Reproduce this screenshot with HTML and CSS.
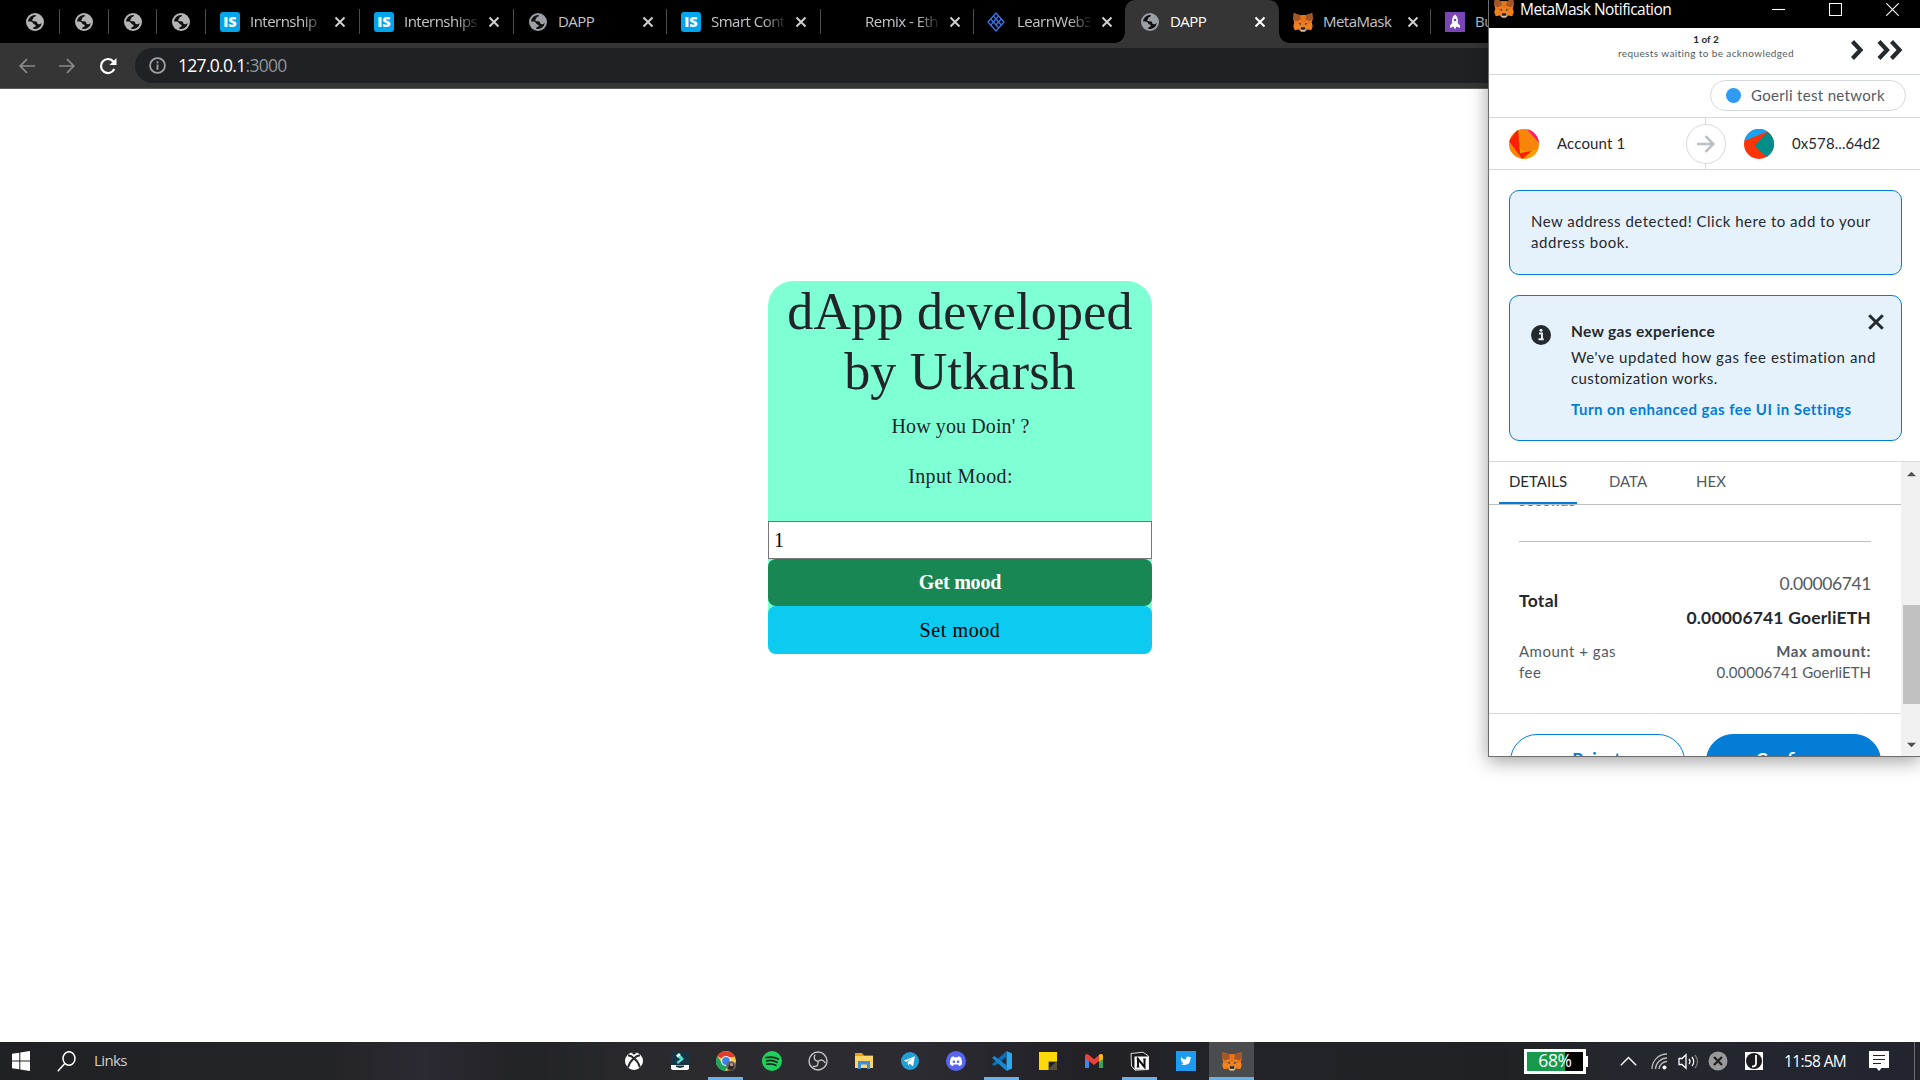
FILE: index.html
```html
<!DOCTYPE html>
<html lang="en">
<head>
<meta charset="utf-8">
<title>DAPP</title>
<link rel="stylesheet" href="styles.css">
</head>
<body>
<svg class="defs" aria-hidden="true">
  <symbol id="globe" viewBox="0 0 18 18">
    <circle cx="9" cy="9" r="9" fill="currentColor"/>
    <path class="globe-sea" d="M2 8.6A7 7 0 0 1 9.6 2c.6.6.2 1.5-.8 1.8-.9.3-1.8.8-1.6 1.7.2.8-1 .8-1 1.700 0 .9 1 1 2.500 1 2 0 2.600.8 2.600 1.900 0 1 1 1.200 2.100 1.100 1 0 1.700-.6 2.400-1.400A7 7 0 0 1 7.200 15.800c-.3-1.200.3-1.700 1.400-1.900 1.200-.2 1.500-1.500.6-2.100-.7-.5-1.600-.5-2-1.400C6.600 9 5.400 8.600 4 8.600z"/>
  </symbol>
  <symbol id="close" viewBox="0 0 12 12"><path d="M1.500 1.500l9 9M10.500 1.500l-9 9" stroke="currentColor" stroke-width="2" fill="none"/></symbol>
  <symbol id="is" viewBox="0 0 20 20"><rect width="20" height="20" rx="3" fill="#00a5ec"/><text x="10" y="15.200" text-anchor="middle" textLength="13.500" lengthAdjust="spacingAndGlyphs" class="is-text">IS</text></symbol>
  <symbol id="fox" viewBox="0 0 20 20">
    <path d="M.8.900 7.200 3.300h5.600L19.200.900l.5 6.300-1 3 1 4-1.400 4.100-3.900-.9-2.600 2H8.200l-2.600-2-3.900.9L.3 14.200l1-4-1-3z" fill="#f08020"/>
    <path d="M.8.900 7.200 3.300l1 4.500L3 9.200.3 7.200zM19.200.900l-6.400 2.400-1 4.500L17 9.200l2.700-2z" fill="#a4552a"/>
    <path d="M7.200 3.300h5.600l-1 7H8.200zM3 9.200l5.200 1-2.600 2.300L1.300 10z" fill="#e67418"/>
    <path d="M17 9.200l-5.200 1 2.600 2.300 4.300-2.500z" fill="#e67418"/>
    <path d="M5.300 11.800l2.600-.9.300 2.100zM14.700 11.800l-2.600-.9-.3 2.100z" fill="#33404a"/>
    <path d="M7 15.500h6l-.8 4H7.800z" fill="#d8c4b2"/><path d="M8 15.200h4l.5 1.700-1 .8h-3l-1-.8z" fill="#1d2429"/>
  </symbol>
</svg>

<div class="tabstrip">
  <div class="tab pinned"><svg class="fav grey"><use href="#globe"/></svg></div>
  <div class="tab pinned"><svg class="fav grey"><use href="#globe"/></svg></div>
  <div class="tab pinned narrow"><svg class="fav grey"><use href="#globe"/></svg></div>
  <div class="tab pinned"><svg class="fav grey"><use href="#globe"/></svg></div>
  <div class="tab"><svg class="fav big"><use href="#is"/></svg><span class="label fade">Internship |</span><svg class="x"><use href="#close"/></svg></div>
  <div class="tab"><svg class="fav big"><use href="#is"/></svg><span class="label fade">Internships</span><svg class="x"><use href="#close"/></svg></div>
  <div class="tab w153"><svg class="fav"><use href="#globe"/></svg><span class="label">DAPP</span><svg class="x"><use href="#close"/></svg></div>
  <div class="tab"><svg class="fav big"><use href="#is"/></svg><span class="label fade">Smart Cont</span><svg class="x"><use href="#close"/></svg></div>
  <div class="tab w153"><svg class="fav"></svg><span class="label fade">Remix - Eth</span><svg class="x"><use href="#close"/></svg></div>
  <div class="tab w152 noline">
    <svg class="fav tall" viewBox="0 0 18 20" fill="none" stroke="#3b74e8" stroke-width="1.300"><path d="M9 1l8 9-8 9-8-9z" stroke-linejoin="round"/><path d="M6.300 4l8 9M3.700 7l8 9M11.700 4l-5.400 6M14.300 7l-5.300 6M6.500 10l-3 3.400"/></svg>
    <span class="label fade">LearnWeb3</span><svg class="x"><use href="#close"/></svg></div>
  <div class="tab active"><svg class="fav"><use href="#globe"/></svg><span class="label">DAPP</span><svg class="x"><use href="#close"/></svg></div>
  <div class="tab w152"><svg class="fav big"><use href="#fox"/></svg><span class="label">MetaMask</span><svg class="x"><use href="#close"/></svg></div>
  <div class="tab noline"><svg class="fav big" viewBox="0 0 20 20"><rect width="20" height="20" fill="#7a45b5"/><path d="M10 2.500c3 2.500 3.300 6 2.700 8.500l2.300 2.500v2.500l-3.500-1.500L10 17.500l-1.500-3L5 16v-2.500L7.300 11C6.700 8.500 7 5 10 2.500z" fill="#fff"/><circle cx="10" cy="8" r="1.300" fill="#7a45b5"/></svg><span class="label">Bu</span></div>
</div>

<div class="toolbar">
  <svg class="nav dim" viewBox="0 0 16 16"><path d="M16 8H1.500M8 1.200L1.200 8 8 14.800"/></svg>
  <svg class="nav dim" viewBox="0 0 16 16"><path d="M0 8h14.500M8 1.200L14.800 8 8 14.800"/></svg>
  <svg class="nav reload" viewBox="0 0 18 18"><path d="M15.300 12A7 7 0 1 1 14.500 4.700" fill="none" stroke="#fff" stroke-width="2.200"/><path d="M17.500 1v7h-7z" fill="#fff"/></svg>
  <div class="omnibox">
    <svg class="info" viewBox="0 0 16 16"><circle cx="8" cy="8" r="7" fill="none" stroke="#9aa0a6" stroke-width="1.700"/><path d="M8 7v5M8 4v1.800" stroke="#9aa0a6" stroke-width="1.800"/></svg>
    <span class="url"><b>127.0.0.1</b>:3000</span>
  </div>
</div>

<main class="page">
  <section class="card">
    <h1><span>dApp developed</span><br><span class="second">by Utkarsh</span></h1>
    <p class="ask">How you Doin' ?</p>
    <label class="ask mood" for="mood">Input Mood:</label>
    <input id="mood" type="text" value="1">
    <button class="btn get">Get mood</button>
    <button class="btn set">Set mood</button>
  </section>
</main>

<footer class="taskbar">
  <svg class="start" viewBox="0 0 18 20" fill="#fff"><path d="M0 2.800l7.300-1V9.500H0zM8.300 1.600L18 0v9.500H8.300zM0 10.500h7.300v7.700L0 17.200zM8.300 10.500H18V20l-9.700-1.600z"/></svg>
  <svg class="search" viewBox="0 0 19 21" fill="none" stroke="#fff" stroke-width="1.500"><ellipse cx="12" cy="7.500" rx="6" ry="6.800"/><path d="M7.800 12.500L.8 20.300"/></svg>
  <span class="links">Links</span>
  <div class="apps">
    <div class="app"><svg viewBox="0 0 20 20"><circle cx="10" cy="10" r="9" fill="#fff"/><path d="M4 4.500Q7 4 10 7.300 13 4 16 4.500M10 7.300Q5.500 11 4 16.500M10 7.300q4.500 3.700 6 9.200" fill="none" stroke="#2b2b2f" stroke-width="2"/><path d="M6 1.600q4-1.400 8 0Q12 2.200 10 3.700 8 2.200 6 1.600z" fill="#2b2b2f"/></svg></div>
    <div class="app"><svg viewBox="0 0 20 20"><rect x="1" y="1" width="18" height="15" rx="2" fill="#173445"/><path d="M1 14h18v3a2 2 0 0 1-2 2H3a2 2 0 0 1-2-2z" fill="#fff"/><path d="M6 14.500h8v1.500l-4 1-4-1z" fill="#173445"/><path d="M6 4.500L9 2l2 2-3 3z" fill="#e8fffb"/><path d="M8 6l3-1.500L14 8l-6 5-1.500-2L10 8.500z" fill="#4ce0cf"/></svg></div>
    <div class="app running"><svg viewBox="0 0 20 20"><circle cx="10" cy="10" r="10" fill="#ffcd40"/><path d="M10 10L1.300 5A10 10 0 0 1 18.700 5.500L18 6H10z" fill="#e33b2e"/><path d="M1.300 5A10 10 0 0 0 9 20l4.500-8L6 12z" fill="#1ea362"/><circle cx="10" cy="10" r="5" fill="#fff"/><circle cx="10" cy="10" r="3.900" fill="#3d80f0"/><circle cx="15" cy="15" r="4.800" fill="#6c625c"/><path d="M12 18l1-5 3-2 2 3-1 5z" fill="#2f2a29"/><circle cx="15.500" cy="13.500" r="1.700" fill="#b59a8b"/></svg></div>
    <div class="app"><svg viewBox="0 0 20 20"><circle cx="10" cy="10" r="10" fill="#1ed15e"/><path d="M4 6.700q6.500-1.800 12.300 1.300M4.500 10q5.500-1.500 10.500 1.200M5 13.200q4.500-1.200 8.800 1.100" fill="none" stroke="#17251b" stroke-width="1.800" stroke-linecap="round"/></svg></div>
    <div class="app"><svg viewBox="0 0 20 20" fill="none" stroke="#c4c4c4" stroke-width="1.400"><circle cx="10" cy="10" r="9"/><path d="M10 10.500Q4.500 9 7 3.800M10 10.500q4.500-3.500 7.200 1.500M10 10.500q1 5.500-5.300 5"/></svg></div>
    <div class="app"><svg viewBox="0 0 20 20"><path d="M1 2h7l2 2.500h9V17H1z" fill="#e9a11b"/><path d="M1 5h18v12H1z" fill="#ffd666"/><path d="M4 18v-8h12v8h-3v-4.500H7V18z" fill="#3c8fd8"/></svg></div>
    <div class="app"><svg viewBox="0 0 20 20"><circle cx="10" cy="10" r="9" fill="#239fd8"/><path d="M3.800 9.800L15 5.200l-2 10-3.300-2.500L8 14.300l-.4-3.200L12.500 7l-6.200 3.800z" fill="#fff"/></svg></div>
    <div class="app"><svg viewBox="0 0 20 20"><circle cx="10" cy="10" r="10" fill="#5865f2"/><path d="M7.800 5.200l-2.300.8C4.300 8 3.700 10.500 4 13.500c1 .8 2 1.300 3 1.500l.8-1.400h4.400L13 15c1-.2 2-.7 3-1.500.3-3-.3-5.500-1.500-7.500l-2.300-.8-.5 1H8.300z" fill="#fff"/><circle cx="7.900" cy="10.700" r="1.300" fill="#5865f2"/><circle cx="12.100" cy="10.700" r="1.300" fill="#5865f2"/></svg></div>
    <div class="app running"><svg viewBox="0 0 20 20"><path d="M14.500 0L20 2.500v15L14.500 20z" fill="#2ba8ee"/><path d="M0 13.200L14.500 0v6L2.500 15z" fill="#0b6fb8"/><path d="M0 6.700L2.500 5l12 9.200V20z" fill="#1689d2"/></svg></div>
    <div class="app"><svg viewBox="0 0 20 20"><path d="M1 1h18v9.500L10.500 19H1z" fill="#ffd80a"/><path d="M10.500 10.500H19V19h-8.500z" fill="#55503d"/><path d="M11 11v6.500l6.500-6.500z" fill="#1f1f22"/></svg></div>
    <div class="app"><svg viewBox="0 0 20 20"><path d="M1 5h4v12H1z" fill="#4385f3"/><path d="M15 5h4v12h-4z" fill="#34a853"/><path d="M1 7V4.500Q2.500 2 5 4l5 4.200L15 4q2.500-2 4 .5V7l-9 7z" fill="#ea4335"/><path d="M15 4q2.500-2 4 .5V8l-4 3z" fill="#fbbc04"/></svg></div>
    <div class="app running"><svg viewBox="0 0 20 20"><path d="M1 2.500L13 1.200 18.500 5v13.500L5 19.200 1.500 15z" fill="#1a1a1a" stroke="#ddd" stroke-width="1"/><path d="M4.500 5.500h14v13h-14z" fill="#fff"/><path d="M8 16V8l6.500 8V8" fill="none" stroke="#111" stroke-width="2"/><path d="M6.500 8H9M13 8h3M6.500 16h3" stroke="#111"/></svg></div>
    <div class="app"><svg viewBox="0 0 20 20"><rect width="20" height="20" fill="#1d9bf0"/><path d="M5 6q2.300 2.500 5 2.600Q9.800 5.600 12 5.500q1 0 1.700.7L15.200 6l-.8 1.800Q14.300 14 8.500 14q-2 0-3.500-1 1.800 0 2.800-.8-1.500-.2-2-1.500Q4.500 9 5 6z" fill="#fff"/></svg></div>
    <div class="app running focused"><svg><use href="#fox"/></svg></div>
  </div>
  <div class="battery"><span class="level">68%</span></div>
  <div class="tray">
    <svg class="chev" viewBox="0 0 17 10"><path d="M.8 9.200L8.500 1.500l7.700 7.700" fill="none" stroke="#fff" stroke-width="1.400"/></svg>
    <svg class="wifi" viewBox="0 0 16 17" fill="none" stroke="#bbb" stroke-width="1.300"><path d="M1 16A15 15 0 0 1 16 1M4.500 16A11.500 11.500 0 0 1 16 5M8 16a8 8 0 0 1 8-7.500"/><circle cx="13.500" cy="14.500" r="2" fill="#fff" stroke="none"/></svg>
    <svg class="vol" viewBox="0 0 22 17" fill="none" stroke="#fff" stroke-width="1.300"><path d="M1 5.500h3l4-3.700v13.400l-4-3.700H1zM11 6q2 2.500 0 5M14 4q3.500 4.500 0 9"/><path d="M17 2q5 6.500 0 13" stroke="#777"/></svg>
    <svg class="stop" viewBox="0 0 20 20"><circle cx="10" cy="10" r="9.500" fill="#9a9a9c"/><path d="M6 6l8 8M14 6l-8 8" stroke="#222" stroke-width="2.400"/></svg>
    <svg class="jot" viewBox="0 0 20 20"><path fill="#fff" d="M1 1h18v18H1z"/><circle cx="10" cy="10" r="8" fill="#1c1c20"/><path d="M12 4v8.500q0 3-4 3" fill="none" stroke="#fff" stroke-width="1.800"/></svg>
    <span class="clock">11:58 AM</span>
    <svg class="note" viewBox="0 0 20 20"><path d="M0 0h20v17h-7.500L10 20l-2.500-3H0z" fill="#fff"/><path d="M4 4.500h12M4 8.500h12M4 12.500h8" stroke="#222" stroke-width="1.200"/></svg>
  </div>
</footer>

<aside class="window">
  <header class="titlebar">
    <svg class="wfox"><use href="#fox"/></svg><span class="wtitle">MetaMask Notification</span>
    <svg class="ctl" viewBox="0 0 13 13"><path d="M0 6.500h13"/></svg>
    <svg class="ctl" viewBox="0 0 13 13"><path d="M.5.500h12v12H.5z"/></svg>
    <svg class="ctl" viewBox="0 0 13 13"><path d="M.3.300l12.400 12.400M12.700.300L.3 12.700"/></svg>
  </header>
  <div class="queue">
    <div class="count"><b>1 of 2</b><span>requests waiting to be acknowledged</span></div>
    <svg class="arrows" viewBox="0 0 54 22" fill="none" stroke="#24292e" stroke-width="4.200"><path d="M2.500 2.500l8 8.500-8 8.500M29 2.500l8 8.500-8 8.500M41.500 2.500l8 8.500-8 8.500"/></svg>
  </div>
  <div class="network"><div class="pill"><i></i><span>Goerli test network</span></div></div>
  <div class="parties">
    <svg class="avatar" viewBox="0 0 30 30"><clipPath id="c"><circle cx="15" cy="15" r="15"/></clipPath><g clip-path="url(#c)"><path fill="#f6850a" d="M0 0h30v30H0z"/><path fill="#fa9f00" d="M0 10l12 20h18V20l-14 3z"/><path fill="#fb1f05" d="M0 12L9 0l2 24 12-2-10 8L0 12z"/><path fill="#fa1b78" d="M18 0h12v14z"/></g></svg>
    <span class="from">Account 1</span>
    <div class="divider"><div class="ring"><svg viewBox="0 0 18 18" fill="none" stroke="#bbc0c5" stroke-width="2.600"><path d="M0 9h16M8.500 1.200L16.300 9l-7.800 7.800"/></svg></div></div>
    <svg class="avatar" viewBox="0 0 30 30"><g clip-path="url(#c)"><path fill="#fc3408" d="M0 0h30v30H0z"/><path fill="#17a3f5" d="M0 0h30L22 3 0 12z"/><path fill="#018e8a" d="M24 2l6 2v26h-5L10.500 17z"/></g></svg>
    <span class="to">0x578...64d2</span>
  </div>
  <div class="notice"><p><span class="n1">New address detected! Click here to add to your</span><br><span class="n2">address book.</span></p></div>
  <div class="notice gas">
    <svg class="i" viewBox="0 0 20 20"><circle cx="10" cy="10" r="10" fill="#24292e"/><path d="M8 8.500h3V14M7.500 14.300h5.200" stroke="#e6f1fb" stroke-width="1.900" fill="none"/><circle cx="10" cy="5.300" r="1.500" fill="#e6f1fb"/></svg>
    <div class="gastext"><b class="g1">New gas experience</b><p><span class="g2">We've updated how gas fee estimation and</span><br><span class="g3">customization works.</span></p><b class="link">Turn on enhanced gas fee UI in Settings</b></div>
    <svg class="dismiss"><use href="#close"/></svg>
  </div>
  <div class="scroller">
    <div class="content">
      <nav class="dtabs"><span class="on">DETAILS</span><span class="data">DATA</span><span class="hex">HEX</span></nav>
      <div class="clip"><b>seconds</b></div>
      <div class="totals">
        <div class="row1"><b>Total</b><div class="amt"><span>0.00006741</span><b>0.00006741 GoerliETH</b></div></div>
        <div class="row2"><span class="fee">Amount + gas<br>fee</span><div class="max"><b>Max amount:</b><span>0.00006741 GoerliETH</span></div></div>
      </div>
      <div class="actions"><button class="reject">Reject</button><button class="confirm">Confirm</button></div>
    </div>
    <div class="scrollbar"><svg viewBox="0 0 10 6"><path d="M0 5.500L5 .5l5 5z"/></svg><div class="thumb"></div><svg viewBox="0 0 10 6"><path d="M0 .5l5 5 5-5z"/></svg></div>
  </div>
</aside>
</body>
</html>
```

FILE: styles.css
```css
* { box-sizing: border-box; }
body { margin: 0; width: 1920px; height: 1080px; overflow: hidden; position: relative; display: flex; flex-direction: column; background: #fff; font-family: "Open Sans", "Noto Sans", sans-serif; }
svg { display: block; flex: none; }
p, h1 { margin: 0; }
button { font: inherit; border: 0; padding: 0; }
.defs { position: absolute; width: 0; height: 0; }
.is-text { font: 800 14px "Open Sans", sans-serif; fill: #fff; }

/* Tab strip */
.tabstrip { display: flex; height: 43px; padding-left: 11px; background: #000; color: #c3c5c8; overflow: hidden; flex: none; }
.tab { width: 154px; height: 43px; display: flex; align-items: center; flex: none; padding-left: 14px; position: relative; }
.tab::after { content: ""; position: absolute; right: 0; top: 9px; width: 1px; height: 25px; background: #4c4d4f; }
.noline::after, .active::after { display: none; }
.w153 { width: 153px; }
.w152 { width: 152px; }
.pinned { width: 49px; padding-left: 15px; padding-right: 0; }
.narrow { width: 48px; }
.fav { width: 18px; height: 18px; margin: 0 11px 0 1px; color: #9aa0a6; }
.fav.grey { color: #b5b5b5; margin: 0; }
.fav.big { width: 20px; height: 20px; margin: 0 10px 0 0; }
.fav.tall { height: 20px; margin-left: -1px; margin-right: 12px; }
.globe-sea { fill: #111; }
.active .globe-sea { fill: #353535; }
.label { width: 73px; font-size: 15px; letter-spacing: -0.520px; line-height: 20px; white-space: nowrap; overflow: hidden; margin: -2px 11px 0 0; }
.fade { -webkit-mask-image: linear-gradient(90deg, #000 72%, rgba(0, 0, 0, .15)); mask-image: linear-gradient(90deg, #000 72%, rgba(0, 0, 0, .15)); }
.x { width: 12px; height: 12px; color: #cfd0d2; }
.active { width: 154px; background: #353535; border-radius: 10px 10px 0 0; color: #fff; padding-left: 15px; margin-left: -1px; }
.active .x { color: #fff; }
.active::before { content: ""; position: absolute; left: -10px; right: -10px; bottom: 0; height: 10px; background: radial-gradient(circle at 0 0, transparent 9.500px, #353535 10px) left / 10px 10px no-repeat, radial-gradient(circle at 100% 0, transparent 9.500px, #353535 10px) right / 10px 10px no-repeat; }

/* Toolbar */
.toolbar { height: 46px; flex: none; display: flex; align-items: center; background: #353535; border-bottom: 1px solid #5c5c5c; padding: 0 0 0 19px; }
.nav { width: 16px; height: 16px; margin-right: 24px; fill: none; stroke: #8b8b8b; stroke-width: 1.700; }
.nav.reload { width: 18px; height: 18px; stroke: none; margin: 0 18px 0 0; }
.omnibox { flex: 1; height: 35px; background: #202124; border-radius: 18px 0 0 18px; display: flex; align-items: center; padding-left: 14px; }
.info { width: 17px; height: 17px; margin-right: 12px; }
.url { font-size: 17.500px; letter-spacing: -0.700px; color: #8f9499; margin-top: -2px; }
.url b { color: #fff; font-weight: 400; }

/* Page */
.page { flex: 1; display: flex; justify-content: center; align-items: flex-start; padding-top: 192px; font-family: "Liberation Serif", serif; color: #212529; }
.card { width: 384px; height: 373px; background: #7fffd4; border-radius: 25px 25px 8px 8px; display: flex; flex-direction: column; text-align: center; }
h1 { font-size: 52px; font-weight: 400; line-height: 60px; height: 130px; padding-top: 1px; letter-spacing: 0.250px; white-space: nowrap; }
.second { letter-spacing: 0.200px; }
.ask { font-size: 20px; line-height: 30px; height: 50px; letter-spacing: 0.100px; padding-left: 1px; }
.mood { height: 60px; letter-spacing: 0.380px; }
input { height: 38px; border: 1px solid #767676; padding: 2px 5px; font: 20px "Liberation Serif", serif; margin: 0; border-radius: 0; outline: 0; }
.btn { height: 47px; border-radius: 8px; font-size: 20px; letter-spacing: 0.600px; }
.get { background: #198754; color: #fff; font-weight: 700; letter-spacing: -0.200px; }
.set { height: 48px; background: #0dcaf0; color: #000; }

/* Taskbar */
.taskbar { height: 38px; flex: none; display: flex; align-items: center; background: linear-gradient(90deg, #202124, #232427 17%, #2b2932 22%, #222327 27%, #2a2a2e 34%, #2c2b32 48%, #212126 56%, #222328 66%, #202124 78%, #25272e 84%, #22252e); color: #fff; padding-left: 12px; position: relative; }
.start { width: 18px; height: 20px; }
.search { width: 19px; height: 21px; margin-left: 27px; }
.links { width: 48px; margin: -2px 0 0 18px; font-size: 15px; letter-spacing: -0.600px; color: #d0d0d0; }
.apps { display: flex; align-items: stretch; height: 38px; margin-left: 469px; gap: 1px; }
.app { width: 45px; display: flex; align-items: center; justify-content: center; position: relative; }
.app svg { width: 20px; height: 20px; }
.running::after { content: ""; position: absolute; left: 5px; right: 5px; bottom: 0; height: 3px; background: #6cb0e8; }
.focused { background: #4b4c50; }
.focused::after { left: 0; right: 0; }
.battery { width: 62px; height: 25px; margin-left: 270px; border: 3px solid #fff; background: linear-gradient(90deg, #16994a 67%, #000 67%); position: relative; display: flex; align-items: center; justify-content: center; }
.battery::after { content: ""; position: absolute; right: -5px; top: 4px; width: 3px; height: 11px; background: #fff; }
.level { font-size: 17.500px; letter-spacing: -0.400px; line-height: 19px; margin-top: -2px; }
.tray { display: flex; align-items: center; flex: 1; height: 38px; border-right: 1px solid #6b6d72; margin-right: 5px; }
.chev { width: 17px; height: 10px; margin-left: 34px; }
.wifi { width: 16px; height: 17px; margin-left: 14px; }
.vol { width: 22px; height: 17px; margin-left: 11px; }
.stop { width: 20px; height: 20px; margin-left: 8px; }
.jot { width: 20px; height: 20px; margin-left: 16px; }
.clock { width: 85px; margin: 0 0 0 20px; font-size: 15.500px; letter-spacing: -0.650px; white-space: nowrap; }
.note { width: 20px; height: 20px; }

/* Wallet window */
.window { position: absolute; left: 1488px; top: 0; width: 432px; height: 757px; overflow: hidden; background: #fff; border: solid #6d6d6d; border-width: 0 0 1px 1px; box-shadow: 0 4px 18px rgba(0, 0, 0, .38); font-family: Lato, "Open Sans", sans-serif; font-size: 15px; line-height: 21px; color: #24292e; display: flex; flex-direction: column; white-space: nowrap; }
.titlebar { height: 28px; flex: none; background: #000; color: #fff; display: flex; align-items: flex-start; padding: 0 21px 0 5px; gap: 44px; font-family: "Open Sans", sans-serif; }
.wfox { width: 20px; height: 20px; margin: -2px -38px 0 0; }
.wtitle { flex: 1; font-size: 15.500px; line-height: 20px; letter-spacing: -0.550px; margin-top: -1px; }
.ctl { width: 13px; height: 13px; margin-top: 3px; fill: none; stroke: #fff; stroke-width: 1.100; }
.queue { height: 47px; flex: none; border-bottom: 1px solid #d6d9dc; display: flex; align-items: flex-start; justify-content: flex-end; padding-right: 16px; }
.count { width: 180px; margin: 4px 54px 0 0; text-align: center; font-size: 10px; line-height: 14px; display: flex; flex-direction: column; color: #535a61; }
.count b { color: #24292e; }
.count span { letter-spacing: 0.380px; }
.arrows { width: 54px; height: 22px; margin-top: 11px; }
.network { height: 43px; flex: none; border-bottom: 1px solid #d6d9dc; display: flex; align-items: center; justify-content: flex-end; padding: 0 14px 1px 0; }
.pill { width: 196px; height: 31px; border: 1px solid #d6d9dc; border-radius: 16px; display: flex; align-items: center; padding-left: 15px; gap: 10px; color: #535a61; letter-spacing: 0.330px; }
.pill i { width: 15px; height: 15px; border-radius: 50%; background: #3099f2; }
.pill span { margin-top: -1px; }
.parties { height: 52px; flex: none; border-bottom: 1px solid #d6d9dc; display: flex; align-items: center; padding-left: 20px; }
.avatar { width: 30px; height: 30px; }
.from { width: 129px; margin-left: 18px; letter-spacing: 0.150px; }
.to { margin-left: 18px; letter-spacing: 0.080px; }
.divider { width: 40px; height: 51px; display: flex; align-items: center; margin-right: 18px; background: linear-gradient(#d6d9dc, #d6d9dc) 19px 0 / 1px 100% no-repeat; }
.ring { width: 40px; height: 40px; border: 1px solid #d6d9dc; border-radius: 50%; background: #fff; display: flex; align-items: center; justify-content: center; }
.ring svg { width: 18px; height: 18px; }
.notice { flex: none; width: 393px; height: 85px; margin: 20px 0 0 20px; padding: 20px 21px 21px; border: 1px solid #037dd6; border-radius: 10px; background: #e5f1fb; }
.gas { height: 146px; display: flex; position: relative; padding-top: 25px; }
.i { width: 20px; height: 20px; margin: 4px 20px 0 0; }
.gastext { display: flex; flex-direction: column; gap: 5px; }
.gastext .link { color: #037dd6; margin-top: 5px; }
.n1 { letter-spacing: 0.490px; }
.n2 { letter-spacing: 0.570px; }
.g1 { font-size: 15.500px; letter-spacing: 0.330px; }
.g2 { letter-spacing: 0.570px; }
.g3 { letter-spacing: 0.400px; }
.link { letter-spacing: 0.460px; }
.dismiss { position: absolute; width: 18px; height: 18px; right: 16px; top: 17px; color: #24292e; }
.scroller { flex: 1; margin-top: 20px; border-top: 1px solid #d6d9dc; display: flex; min-height: 0; }
.content { width: 412px; overflow: hidden; }
.dtabs { height: 43px; display: flex; padding-left: 10px; border-bottom: 1px solid #bbc0c5; color: #535a61; line-height: 38px; }
.dtabs span { width: 78px; height: 42px; text-align: center; }
.dtabs .on { color: #24292e; border-bottom: 2px solid #037dd6; }
.dtabs .data { margin-left: 12px; }
.dtabs .hex { margin-left: 5px; }
.clip { height: 37px; margin: 0 30px; border-bottom: 1px solid #bbc0c5; overflow: hidden; color: #28a745; font-size: 15px; }
.clip b { display: block; margin-top: -14px; line-height: 18px; letter-spacing: 0.400px; }
.totals { height: 172px; border-bottom: 1px solid #d6d9dc; padding: 24px 30px 0; }
.row1 { display: flex; justify-content: space-between; align-items: center; font-size: 17.500px; line-height: 34px; height: 69px; }
.row1 > b { letter-spacing: 0.300px; }
.amt, .max { display: flex; flex-direction: column; text-align: right; }
.amt span { color: #535a61; letter-spacing: -0.400px; }
.amt b { letter-spacing: 0.180px; }
.row2 { display: flex; justify-content: space-between; color: #535a61; padding-top: 6px; }
.fee { letter-spacing: 0.500px; }
.max b { letter-spacing: 0.600px; }
.max span { letter-spacing: 0; }
.actions { display: flex; padding: 20px 0 0 21px; gap: 21px; }
.actions button { flex: none; width: 175px; height: 54px; border-radius: 30px; font-size: 17.500px; line-height: 48px; font-weight: 700; color: #037dd6; border: 1px solid #037dd6; background: #fff; display: flex; justify-content: center; align-items: flex-start; padding-right: 2px; }
.actions .confirm { background: #037dd6; color: #fff; padding-right: 12px; }
.scrollbar { width: 19px; background: #f1f1f1; display: flex; flex-direction: column; align-items: center; padding: 9px 0 8px; }
.scrollbar svg { width: 9px; height: 6px; fill: #505050; margin-left: 2px; }
.thumb { width: 17px; height: 99px; background: #c1c1c1; margin: 128px 0 auto 2px; }
```
